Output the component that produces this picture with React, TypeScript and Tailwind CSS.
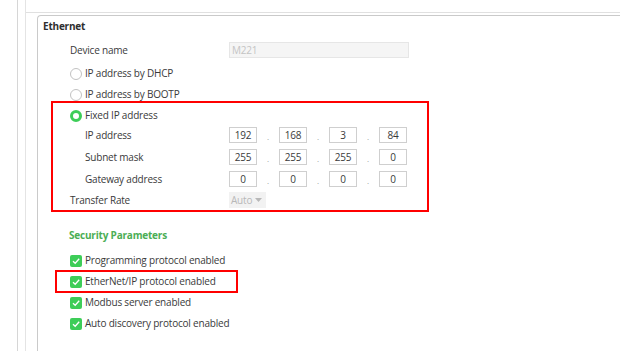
const font = { fontFamily: '"Open Sans", "Noto Sans", sans-serif' };

function Radio({ checked }: { checked?: boolean }) {
  if (checked) {
    return (
      <span className="w-[12px] h-[12px] rounded-full border-[3px] border-[#3dcd58] bg-white shrink-0" />
    );
  }
  return <span className="w-[12px] h-[12px] rounded-full border border-[#c2c2c2] bg-white shrink-0" />;
}

function Check() {
  return (
    <span className="w-[12px] h-[12px] rounded-[2px] bg-[#3dcd58] flex items-center justify-center shrink-0">
      <svg width="10" height="10" viewBox="0 0 10 10">
        <polyline points="2,5.2 4.2,7.3 8.2,2.8" fill="none" stroke="white" strokeWidth="1.3" />
      </svg>
    </span>
  );
}

function IpRow({ label, parts }: { label: string; parts: string[] }) {
  return (
    <div className="flex items-center h-[16px]">
      <span className="w-[159px] pl-[15px] shrink-0">{label}</span>
      <div className="flex items-center">
        {parts.map((p, i) => (
          <div key={i} className="flex items-center">
            {i > 0 && (
              <span className="w-[22px] text-center text-[#9a9a9a] text-[8px] leading-none pt-[4px]">.</span>
            )}
            <span className="w-[28px] h-[16px] border border-[#cfcfcf] flex items-center justify-center leading-none">
              {p}
            </span>
          </div>
        ))}
      </div>
    </div>
  );
}

export default function App() {
  return (
    <div
      className="w-[620px] h-[351px] bg-white flex overflow-hidden text-[10px] tracking-[-0.2px] text-[#3a3a3a]"
      style={font}
    >
      <div className="w-[17px] shrink-0" />
      <div className="w-[8px] shrink-0 border-l border-[#d6d6d6]" />
      <div className="flex-1 flex flex-col border-l border-[#e4e4e4]">
        <div className="h-[12px] shrink-0" />
        <div className="h-[3px] shrink-0 border-t border-[#e0e0e0]" />
        <div className="ml-[11px] flex-1 border-l border-t border-[#cacaca] rounded-tl-[4px] relative">
          <div className="h-[20px] pl-[5px] flex items-center font-bold text-[#2e2e2e]">Ethernet</div>

          <div className="pl-[32px] flex flex-col">
            <div className="mt-[6px] h-[16px] flex items-center">
              <span className="w-[159px] shrink-0">Device name</span>
              <span className="w-[180px] h-[16px] bg-[#f5f5f5] border border-[#e6e6e6] flex items-center pl-[2px] text-[#c4c4c4]">
                M221
              </span>
            </div>

            <div className="mt-[5px] h-[21px] flex items-center gap-[3px]">
              <Radio />
              <span>IP address by DHCP</span>
            </div>
            <div className="h-[21px] flex items-center gap-[3px]">
              <Radio />
              <span>IP address by BOOTP</span>
            </div>
            <div className="h-[21px] flex items-center gap-[3px]">
              <Radio checked />
              <span>Fixed IP address</span>
            </div>

            <div className="mt-[1px] flex flex-col gap-[6px]">
              <IpRow label="IP address" parts={["192", "168", "3", "84"]} />
              <IpRow label="Subnet mask" parts={["255", "255", "255", "0"]} />
              <IpRow label="Gateway address" parts={["0", "0", "0", "0"]} />
            </div>

            <div className="mt-[5px] h-[16px] flex items-center">
              <span className="w-[159px] shrink-0">Transfer Rate</span>
              <span className="w-[37px] h-[16px] bg-[#f2f2f2] flex items-center pl-[2px] gap-[3px] text-[#b8b8b8]">
                Auto
                <svg width="7" height="4" viewBox="0 0 7 4">
                  <polygon points="0,0 7,0 3.5,4" fill="#b8b8b8" />
                </svg>
              </span>
            </div>

            <div className="mt-[19px] h-[16px] flex items-center font-bold text-[#4bae55] -ml-[1px]">
              Security Parameters
            </div>

            <div className="mt-[7px] flex flex-col">
              {[
                "Programming protocol enabled",
                "EtherNet/IP protocol enabled",
                "Modbus server enabled",
                "Auto discovery protocol enabled",
              ].map((t) => (
                <div key={t} className="h-[21px] flex items-center gap-[3px]">
                  <Check />
                  <span>{t}</span>
                </div>
              ))}
            </div>
          </div>

          <div className="absolute left-[13px] top-[85px] w-[378px] h-[111px] border-2 border-[#ff0000]" />
          <div className="absolute left-[17px] top-[254px] w-[183px] h-[23px] border-2 border-[#ff0000]" />
        </div>
      </div>
    </div>
  );
}
